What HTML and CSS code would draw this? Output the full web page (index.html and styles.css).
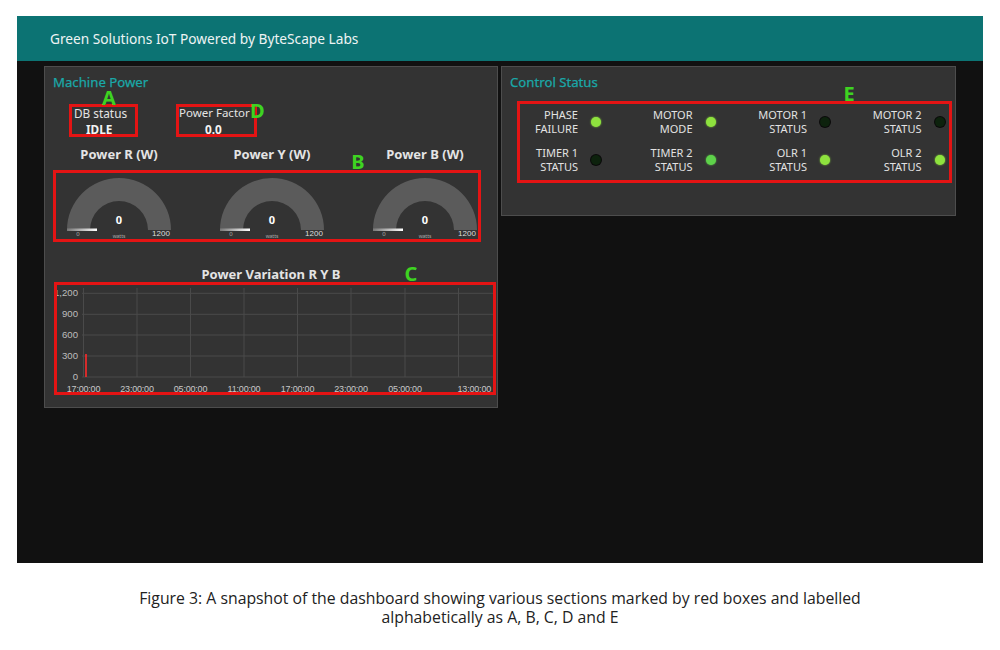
FILE: index.html
```html
<!DOCTYPE html>
<html>
<head>
<meta charset="utf-8">
<link rel="stylesheet" href="styles.css">
</head>
<body>
<div class="figure">
  <div class="topbar">Green Solutions IoT Powered by ByteScape Labs</div>
  <div class="main">
    <section class="panel panel-power">
      <h2 class="panel-title">Machine Power</h2>
      <div class="stat-row">
        <div class="stat stat-db">
          <div class="stat-label">DB status</div>
          <div class="stat-value">IDLE</div>
        </div>
        <div class="stat stat-pf">
          <div class="stat-label">Power Factor</div>
          <div class="stat-value">0.0</div>
        </div>
      </div>
      <div class="gauges">
        <div class="gauge">
          <div class="gauge-title">Power R (W)</div>
          <svg class="gauge-svg" width="146" height="80" viewBox="0 0 146 80">
            <defs><linearGradient id="g1" x1="0" x2="1"><stop offset="0" stop-color="#777"/><stop offset="1" stop-color="#fff"/></linearGradient></defs>
            <path d="M21 68 A52 52 0 0 1 125 68 L102 68 A29 29 0 0 0 44 68 Z" fill="#5b5b5b"/>
            <rect x="21" y="66.5" width="30" height="2.5" fill="url(#g1)"/>
            <text x="73" y="62" class="g-val">0</text>
            <text x="73" y="76" class="g-unit">watts</text>
            <text x="32" y="74" class="g-min">0</text>
            <text x="115" y="74" class="g-max">1200</text>
          </svg>
        </div>
        <div class="gauge">
          <div class="gauge-title">Power Y (W)</div>
          <svg class="gauge-svg" width="146" height="80" viewBox="0 0 146 80">
            <path d="M21 68 A52 52 0 0 1 125 68 L102 68 A29 29 0 0 0 44 68 Z" fill="#5b5b5b"/>
            <rect x="21" y="66.5" width="30" height="2.5" fill="url(#g1)"/>
            <text x="73" y="62" class="g-val">0</text>
            <text x="73" y="76" class="g-unit">watts</text>
            <text x="32" y="74" class="g-min">0</text>
            <text x="115" y="74" class="g-max">1200</text>
          </svg>
        </div>
        <div class="gauge">
          <div class="gauge-title">Power B (W)</div>
          <svg class="gauge-svg" width="146" height="80" viewBox="0 0 146 80">
            <path d="M21 68 A52 52 0 0 1 125 68 L102 68 A29 29 0 0 0 44 68 Z" fill="#5b5b5b"/>
            <rect x="21" y="66.5" width="30" height="2.5" fill="url(#g1)"/>
            <text x="73" y="62" class="g-val">0</text>
            <text x="73" y="76" class="g-unit">watts</text>
            <text x="32" y="74" class="g-min">0</text>
            <text x="115" y="74" class="g-max">1200</text>
          </svg>
        </div>
      </div>
      <div class="chart-title">Power Variation R Y B</div>
      <svg class="chart" width="443" height="113" viewBox="0 0 443 113">
        <g class="grid">
          <line x1="28" y1="11.3" x2="442" y2="11.3"/>
          <line x1="28" y1="32.3" x2="442" y2="32.3"/>
          <line x1="28" y1="53" x2="442" y2="53"/>
          <line x1="28" y1="74" x2="442" y2="74"/>
          <line x1="28" y1="95" x2="442" y2="95"/>
          <line x1="29.5" y1="6" x2="29.5" y2="95"/>
          <line x1="83" y1="6" x2="83" y2="95"/>
          <line x1="136.5" y1="6" x2="136.5" y2="95"/>
          <line x1="190" y1="6" x2="190" y2="95"/>
          <line x1="243.5" y1="6" x2="243.5" y2="95"/>
          <line x1="297" y1="6" x2="297" y2="95"/>
          <line x1="351" y1="6" x2="351" y2="95"/>
          <line x1="404.5" y1="6" x2="404.5" y2="95"/>
        </g>
        <g class="ylab">
          <text x="24" y="14">1,200</text>
          <text x="24" y="35">900</text>
          <text x="24" y="56">600</text>
          <text x="24" y="77">300</text>
          <text x="24" y="98">0</text>
        </g>
        <g class="xlab">
          <text x="29.5" y="110">17:00:00</text>
          <text x="83" y="110">23:00:00</text>
          <text x="136.5" y="110">05:00:00</text>
          <text x="190" y="110">11:00:00</text>
          <text x="243.5" y="110">17:00:00</text>
          <text x="297" y="110">23:00:00</text>
          <text x="351" y="110">05:00:00</text>
          <text x="437" y="110" class="last">13:00:00</text>
        </g>
        <line x1="32" y1="72" x2="32" y2="95" stroke="#ff2a2a" stroke-width="1.6"/>
      </svg>
    </section>
    <section class="panel panel-control">
      <h2 class="panel-title">Control Status</h2>
      <div class="status-grid">
        <div class="status"><span class="s-label">PHASE<br>FAILURE</span><span class="led on"></span></div>
        <div class="status"><span class="s-label">MOTOR<br>MODE</span><span class="led on"></span></div>
        <div class="status"><span class="s-label">MOTOR 1<br>STATUS</span><span class="led off"></span></div>
        <div class="status"><span class="s-label">MOTOR 2<br>STATUS</span><span class="led off"></span></div>
        <div class="status"><span class="s-label">TIMER 1<br>STATUS</span><span class="led off"></span></div>
        <div class="status"><span class="s-label">TIMER 2<br>STATUS</span><span class="led on2"></span></div>
        <div class="status"><span class="s-label">OLR 1<br>STATUS</span><span class="led on"></span></div>
        <div class="status"><span class="s-label">OLR 2<br>STATUS</span><span class="led on"></span></div>
      </div>
    </section>
  </div>

  <div class="box box-a"></div>
  <div class="box box-d"></div>
  <div class="box box-b"></div>
  <div class="box box-c"></div>
  <div class="box box-e"></div>
  <span class="tag tag-a">A</span>
  <span class="tag tag-d">D</span>
  <span class="tag tag-b">B</span>
  <span class="tag tag-c">C</span>
  <span class="tag tag-e">E</span>
</div>
<p class="caption"><span class="cap-line">Figure 3: A snapshot of the dashboard showing various sections marked by red boxes and labelled</span><span class="cap-line">alphabetically as A, B, C, D and E</span></p>
</body>
</html>
```

FILE: styles.css
```css
html, body {
  margin: 0;
  padding: 0;
  background: #ffffff;
}
body {
  width: 1000px;
  height: 650px;
  overflow: hidden;
  padding-top: 16px;
  box-sizing: border-box;
}
.figure {
  position: relative;
  width: 966px;
  height: 547px;
  margin-left: 17px;
  background: #111111;
  font-family: "Noto Sans", "DejaVu Sans", sans-serif;
  color: #e6e6e6;
}
.topbar {
  height: 45px;
  background: #0c7373;
  color: #eef4f4;
  font-size: 13.7px;
  line-height: 45px;
  padding-left: 33px;
}
.main {
  display: flex;
  align-items: flex-start;
  gap: 3px;
  padding: 5px 0 0 27px;
}
.panel {
  box-sizing: border-box;
  background: #333333;
  border: 1px solid #4d4d4d;
}
.panel-power {
  width: 454px;
  height: 342px;
}
.panel-control {
  width: 455px;
  height: 150px;
}
.panel-title {
  margin: 7px 0 0 8px;
  font-size: 13.2px;
  font-weight: normal;
  line-height: 16px;
  color: #1aa8a8;
  -webkit-text-stroke: 0.25px #1aa8a8;
}
.stat-row {
  display: flex;
  margin-top: 15px;
  padding-left: 24px;
  gap: 38px;
}
.stat {
  font-size: 11.8px;
  line-height: 16px;
}
.stat-db { width: 69px; }
.stat-pf { width: 81px; }
.stat-db .stat-label { padding-left: 5px; }
.stat-db .stat-value { padding-left: 17px; }
.stat-pf .stat-label { padding-left: 3px; font-size: 11.5px; }
.stat-pf .stat-value { padding-left: 29px; }
.stat-label { color: #e4e4e4; }
.stat-value { font-weight: bold; color: #f2f2f2; }
.gauges {
  display: grid;
  grid-template-columns: 146px 146px 146px;
  column-gap: 7px;
  padding-left: 1px;
  margin-top: 9px;
}
.gauge-title {
  text-align: center;
  font-size: 13px;
  font-weight: bold;
  line-height: 16px;
  color: #e4e4e4;
}
.gauge-svg { display: block; }
.g-val { font: bold 11px "Noto Sans", sans-serif; fill: #ffffff; text-anchor: middle; }
.g-unit { font: 5px "Noto Sans", sans-serif; fill: #aaaaaa; text-anchor: middle; }
.g-min { font: 6px "Noto Sans", sans-serif; fill: #aaaaaa; text-anchor: middle; }
.g-max { font: 8px "Liberation Sans", sans-serif; fill: #dddddd; text-anchor: middle; }
.chart-title {
  margin-top: 24px;
  text-align: center;
  font-size: 13px;
  font-weight: bold;
  line-height: 16px;
  color: #e4e4e4;
}
.chart {
  display: block;
  margin-left: 9px;
  overflow: visible;
}
.grid line { stroke: #4a4a4a; stroke-width: 1; }
.ylab text { font: 9.6px "Liberation Sans", sans-serif; fill: #bdbdbd; text-anchor: end; }
.xlab text { font: 9px "Liberation Sans", sans-serif; fill: #c8c8c8; text-anchor: middle; letter-spacing: -0.2px; }
.xlab text.last { text-anchor: end; }
.status-grid {
  display: grid;
  grid-template-columns: 98px 114.5px 114.5px 114.5px;
  row-gap: 10px;
  margin-top: 18px;
  padding-left: 8px;
}
.status {
  display: flex;
  justify-content: flex-end;
  align-items: center;
}
.s-label {
  text-align: right;
  font-size: 11px;
  line-height: 14px;
  color: #e2e2e2;
}
.led {
  width: 10px;
  height: 10px;
  border-radius: 50%;
  margin-left: 13px;
  margin-right: 7px;
}
.led.on { background: #8ee23e; box-shadow: 0 0 2px #8ee23e; }
.led.on2 { background: #5ed24a; box-shadow: 0 0 2px #5ed24a; }
.led.off { background: #0d220d; box-shadow: 0 0 0 1px #0a0a0a; }

.box {
  position: absolute;
  box-sizing: border-box;
  border: 3px solid #e41414;
}
.box-a { left: 52px; top: 88px; width: 69px; height: 33px; }
.box-d { left: 159px; top: 88px; width: 81px; height: 33px; }
.box-b { left: 36px; top: 154px; width: 428px; height: 72px; }
.box-c { left: 37px; top: 266px; width: 442px; height: 113px; }
.box-e { left: 500px; top: 85px; width: 435px; height: 82px; }
.tag {
  position: absolute;
  width: 14px;
  margin-left: -7px;
  text-align: center;
  font: bold 20px/14px "Noto Sans", sans-serif;
  color: #3ed321;
}
.tag-a { left: 92px; top: 75px; }
.tag-d { left: 240px; top: 88px; }
.tag-b { left: 341px; top: 139px; }
.tag-c { left: 394px; top: 251px; }
.tag-e { left: 832px; top: 71px; }

.caption {
  margin: 26px 0 0 0;
  text-align: center;
  font-family: "Open Sans", sans-serif;
  font-size: 15.8px;
  color: #222222;
}
.cap-line {
  display: block;
  line-height: 19px;
  height: 19px;
}
```
